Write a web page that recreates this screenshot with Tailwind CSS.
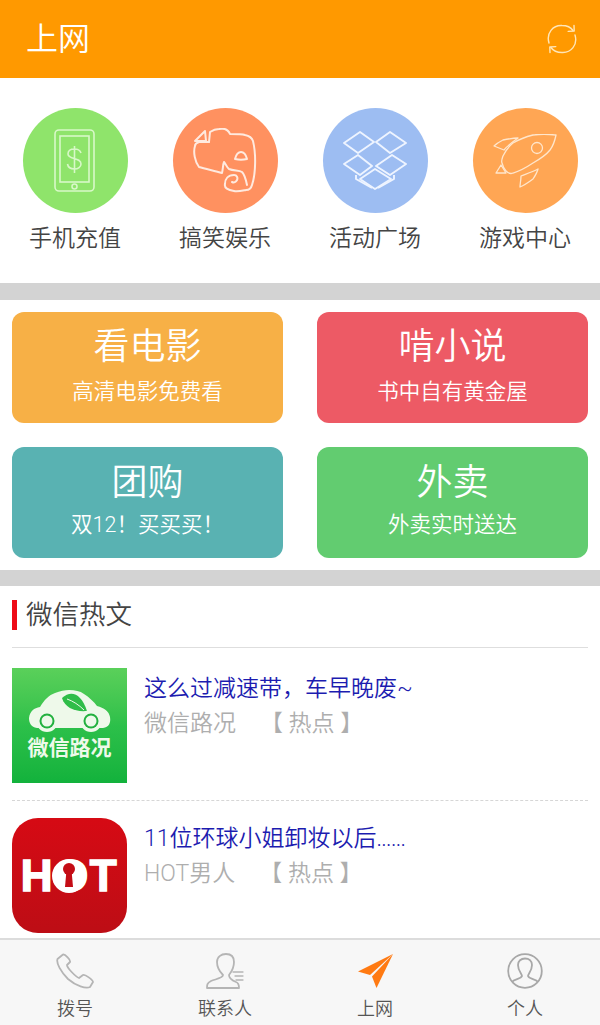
<!DOCTYPE html>
<html lang="zh-CN">
<head>
<meta charset="utf-8">
<script src="https://cdn.jsdelivr.net/npm/@tailwindcss/browser@4"></script>
</head>
<body class="m-0 bg-white font-['Roboto','Noto_Sans_CJK_SC',sans-serif] font-normal">
<div class="relative w-[600px] h-[1025px] overflow-hidden bg-white flex flex-col">
  <header class="h-[78px] shrink-0 bg-[#ff9900] flex items-center justify-between pl-[26px] pr-[23px]">
    <span class="text-[32px] leading-none text-white font-[350]">上网</span>
    <svg width="30" height="30" viewBox="0 0 30 30" fill="none" stroke="#ffe6b8" stroke-width="1.4" stroke-linecap="round" stroke-linejoin="round">
      <path d="M2 19C-1 9 6 1 15 1.500c5 0 9 2 11 5"/>
      <path d="M27 1.500l.2 5.500-6 .4"/>
      <path d="M28 11c3 10-4 18-13 17.500c-5 0-9-2-11-5"/>
      <path d="M3 28.500l-.2-5.500 6-.4"/>
    </svg>
  </header>

  <section class="h-[205px] shrink-0 grid grid-cols-4 pt-[30px]">
    <div class="flex flex-col items-center">
      <div class="w-[105px] h-[105px] rounded-full bg-[#8fe46b] flex items-center justify-center">
        <svg width="42" height="64" viewBox="0 0 42 64" fill="none" stroke="#d8f8c8" stroke-width="1.600">
          <rect x="1" y="1" width="39" height="61" rx="4"/>
          <rect x="6" y="7" width="29" height="46"/>
          <circle cx="20.500" cy="57.500" r="2.500"/>
          <path d="M27 24c-1-3-3-4-6.500-4c-4 0-6.500 2-6.500 5c0 6 13 3 13 10c0 3-3 5-6.500 5c-4 0-6.500-2-7-5M20.500 17v27"/>
        </svg>
      </div>
      <span class="mt-[10px] text-[23px] leading-[32px] text-[#444] font-[350]">手机充值</span>
    </div>
    <div class="flex flex-col items-center">
      <div class="w-[105px] h-[105px] rounded-full bg-[#ff9160] flex items-center justify-center">
        <svg width="64" height="65" viewBox="0 0 64 65" fill="none" stroke="#ffeadf" stroke-width="2" stroke-linejoin="round" stroke-linecap="round">
          <path d="M2 13L12 3L13 13z"/>
          <path d="M16 14L17 4C20 2 23 1 26 1C31 0 35 1 37 6C44 6 49 6 52 7C57 8 59 10 60 13C63 25 63 45 59 57C58 61 56 62 53 62C48 63 44 64 41 63C35 62 31 60 32 56C32 51 35 47 41 47C44 47 45 50 44 52C43 54 41 55 39 54"/>
          <path d="M16 14L6 14C3 15 2 16 2 18C0 24 2 34 6 39C13 41 22 43 29 45C30 41 30 36 31 34C33 36 34 40 36 41C41 43 46 42 49 44C52 47 53 52 54 57"/>
          <path d="M42 31C43 27 45 24 48 24C51 24 53 27 54 31C50 32 46 32 42 31z"/>
        </svg>
      </div>
      <span class="mt-[10px] text-[23px] leading-[32px] text-[#444] font-[350]">搞笑娱乐</span>
    </div>
    <div class="flex flex-col items-center">
      <div class="w-[105px] h-[105px] rounded-full bg-[#9dbdf2] flex items-center justify-center">
        <svg width="64" height="60" viewBox="0 0 64 60" fill="none" stroke="#eef4ff" stroke-width="1.900" stroke-linejoin="round">
          <path d="M17 1L31 11L15 22L1 12z"/>
          <path d="M47 1L63 12L47 22L33 11z"/>
          <path d="M15 24L29 35L17 44L1 33z"/>
          <path d="M49 24L63 33L47 44L33 35z"/>
          <path d="M32 38L48 48L32 58L17 48z"/>
          <path d="M13 44v4L29 57M51 44v4L35 57"/>
        </svg>
      </div>
      <span class="mt-[10px] text-[23px] leading-[32px] text-[#444] font-[350]">活动广场</span>
    </div>
    <div class="flex flex-col items-center">
      <div class="w-[105px] h-[105px] rounded-full bg-[#ffa654] flex items-center justify-center">
        <svg width="64" height="54" viewBox="0 0 64 54" fill="none" stroke="#ffe6cc" stroke-width="1.300" stroke-linejoin="round">
          <path d="M63 1C55 0 47 0 40 1C32 3 25 6 20 9C15 13 12 18 10 22C9 25 8 27 9 29C10 33 11 35 13 37C15 39 18 40 20 39C27 37 34 33 40 29C47 25 53 21 57 16C60 12 62 6 63 1z"/>
          <circle cx="44" cy="14" r="5.500"/>
          <path d="M1 12C3 10 6 8 10 6C15 5 20 4 25 4C21 7 18 9 15 12C13 13 12 15 11 16z"/>
          <path d="M45 35C39 38 33 40 28 42C28 46 27 50 27 53C32 51 36 48 40 45C42 42 44 39 45 35z"/>
          <path d="M3 39L8 31L13 39z"/>
        </svg>
      </div>
      <span class="mt-[10px] text-[23px] leading-[32px] text-[#444] font-[350]">游戏中心</span>
    </div>
  </section>

  <div class="h-[17px] shrink-0 bg-[#d3d3d3]"></div>

  <section class="h-[270px] shrink-0 grid grid-cols-2 gap-x-[34px] gap-y-[24px] px-[12px] py-[12px]">
    <div class="h-[111px] rounded-[12px] bg-[#f7b046] flex flex-col items-center text-white">
      <span class="mt-[15px] text-[36px] leading-[40px] font-[350]">看电影</span>
      <span class="mt-[10px] text-[21.500px] leading-[30px] font-[350]">高清电影免费看</span>
    </div>
    <div class="h-[111px] rounded-[12px] bg-[#ed5a65] flex flex-col items-center text-white">
      <span class="mt-[15px] text-[36px] leading-[40px] font-[350]">啃小说</span>
      <span class="mt-[10px] text-[21.500px] leading-[30px] font-[350]">书中自有黄金屋</span>
    </div>
    <div class="h-[111px] rounded-[12px] bg-[#59b2b2] flex flex-col items-center text-white">
      <span class="mt-[16px] text-[36px] leading-[40px] font-[350]">团购</span>
      <span class="mt-[7px] text-[21.500px] leading-[30px] font-[350]">双12！买买买！</span>
    </div>
    <div class="h-[111px] rounded-[12px] bg-[#62cc70] flex flex-col items-center text-white">
      <span class="mt-[16px] text-[36px] leading-[40px] font-[350]">外卖</span>
      <span class="mt-[7px] text-[21.500px] leading-[30px] font-[350]">外卖实时送达</span>
    </div>
  </section>

  <div class="h-[16px] shrink-0 bg-[#d3d3d3]"></div>

  <section class="flex-1 min-h-0 px-[12px]">
    <div class="h-[62px] border-b border-[#dedede] flex items-center pb-[3px]">
      <span class="w-[5px] h-[30px] bg-[#ee0b17] mr-[9px]"></span>
      <span class="text-[26.500px] leading-none text-[#444] font-[350]">微信热文</span>
    </div>
    <article class="h-[153px] border-b border-dashed border-[#d6d6d6] pt-[20px] flex">
      <div class="relative w-[115px] h-[115px] shrink-0 bg-gradient-to-b from-[#5ad05a] via-[#2cc04a] to-[#12b23c] flex flex-col items-center">
        <svg class="mt-[22px]" width="82" height="42" viewBox="0 0 82 42">
          <path fill="#eef9ea" d="M0 28C1 21 5 18 11 17C15 10 20 5 26 3C31 1 36 0 40 0C46 0 51 1 55 4C60 7 65 12 68 16C75 18 80 21 81 27C82 33 80 37 74 38L8 38C2 37 0 33 0 28z"/>
          <path fill="#2fbd49" d="M33 8C42 0 52 3 58 21C46 22 36 18 33 8z"/>
          <path fill="none" stroke="#eef9ea" d="M38 9C44 11 50 15 55 20"/>
          <circle cx="18" cy="31" r="11" fill="#eef9ea"/><circle cx="18" cy="31" r="7.500" fill="#22b13f"/><circle cx="18" cy="31" r="5.500" fill="#eef9ea"/>
          <circle cx="62" cy="31" r="11" fill="#eef9ea"/><circle cx="62" cy="31" r="7.500" fill="#22b13f"/><circle cx="62" cy="31" r="5.500" fill="#eef9ea"/>
        </svg>
        <span class="mt-[4px] text-[21px] leading-[24px] font-bold text-[#eef9ea]">微信路况</span>
      </div>
      <div class="pl-[17px] pt-[4px]">
        <p class="text-[23px] leading-[34px] text-[#1c1cb0] font-[350]">这么过减速带，车早晚废~</p>
        <p class="mt-[1px] text-[23px] leading-[34px] text-[#aeaeae] font-[350]">微信路况<span class="ml-[24px]">【 热点 】</span></p>
      </div>
    </article>
    <article class="pt-[17px] flex">
      <div class="relative w-[115px] h-[115px] shrink-0 rounded-[26px] bg-gradient-to-b from-[#d60a14] to-[#bd0d15] flex items-center justify-center">
        <span class="text-[44px] leading-none font-bold text-white font-['Liberation_Sans',sans-serif] tracking-[1.500px] [-webkit-text-stroke:1.500px_white]">HOT</span>
        <svg class="absolute left-[39px] top-[40px]" width="36" height="36" viewBox="0 0 36 36">
          <circle cx="18" cy="18" r="17" fill="#fff"/>
          <circle cx="18" cy="11" r="6" fill="#c40c15"/>
          <path fill="#c40c15" d="M15.500 12h5l1.500 17h-8z"/>
        </svg>
      </div>
      <div class="pl-[17px] pt-[4px]">
        <p class="text-[23px] leading-[34px] text-[#1c1cb0] font-[350]">11位环球小姐卸妆以后<span class="tracking-[-0.7px]">......</span></p>
        <p class="mt-[1px] text-[23px] leading-[34px] text-[#aeaeae] font-[350]">HOT男人<span class="ml-[24px]">【 热点 】</span></p>
      </div>
    </article>
  </section>

  <nav class="absolute left-0 bottom-0 w-full h-[87px] bg-[#f7f7f7] border-t-2 border-[#dcdcdc] grid grid-cols-4">
    <div class="flex flex-col items-center pt-[13px]">
      <svg width="38" height="36" viewBox="0 0 38 36" fill="none" stroke="#b5b5b5" stroke-width="1.800" stroke-linejoin="round">
        <path d="M7 1.500L1.500 6C0 10 5 19 12 26C20 33 30 36 34 34L37 29C37 27 29 21 27 22L23 25C20 24 11 15 11 12L14 9C15 7 9 1 7 1.500z"/>
      </svg>
      <span class="mt-[7px] text-[18px] leading-[26px] text-[#555] font-[350]">拨号</span>
    </div>
    <div class="flex flex-col items-center pt-[13px]">
      <svg width="38" height="36" viewBox="0 0 38 36" fill="none" stroke="#b5b5b5" stroke-width="1.800" stroke-linecap="round" stroke-linejoin="round">
        <path d="M17 22c-3-3-6-7-6-13c0-5 4-8 9-8c5 0 8 3 8 8c0 5-1 8-5 13c0 3 2 5 7 7c3 1 3 4 3 6L1 35c0-3 0-5 4-7c5-2 12-3 12-6z"/>
        <path d="M27 19h10M29 23h8M30 27h7" stroke-width="1.300"/>
      </svg>
      <span class="mt-[7px] text-[18px] leading-[26px] text-[#555] font-[350]">联系人</span>
    </div>
    <div class="flex flex-col items-center pt-[13px]">
      <svg width="36" height="36" viewBox="0 0 36 36">
        <path fill="#ff7a12" d="M36 1L1 18.500L13 22z"/>
        <path fill="#ff7a12" d="M36 1L15 23.500L19.500 35z"/>
      </svg>
      <span class="mt-[7px] text-[18px] leading-[26px] text-[#555] font-[350]">上网</span>
    </div>
    <div class="flex flex-col items-center pt-[13px]">
      <svg width="36" height="36" viewBox="0 0 36 36" fill="none" stroke="#a8a8a8" stroke-width="1.800" stroke-linejoin="round">
        <circle cx="18" cy="18" r="16.800"/>
        <path d="M5 29c2-3 9-3 10-6c0-2-4-5-4-11c0-4 3-6.500 7-6.500c4 0 7 2.500 7 6.500c0 6-4 9-4 11c1 3 8 3 10 6"/>
      </svg>
      <span class="mt-[7px] text-[18px] leading-[26px] text-[#555] font-[350]">个人</span>
    </div>
  </nav>
</div>
</body>
</html>
